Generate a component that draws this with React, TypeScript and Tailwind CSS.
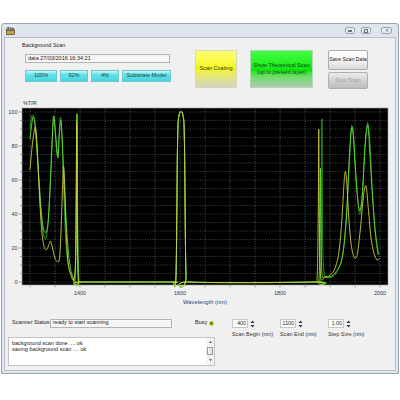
import React from 'react';

type Pt = [number, number];

// nm / %T -> pixel position in the chart svg (same coordinates as the page)
const px = (nm: number) => 30 + (nm - 1300) * 0.5;
const py = (v: number) => 282 - v * 1.7;

const toPath = (pts: Pt[]) => {
  const p = pts.map(([nm, v]) => [px(nm), py(v)]);
  let d = `M${p[0][0]},${p[0][1]}`;
  for (let i = 0; i < p.length - 1; i++) {
    const p0 = p[i - 1] || p[i];
    const p1 = p[i];
    const p2 = p[i + 1];
    const p3 = p[i + 2] || p2;
    const c1x = p1[0] + (p2[0] - p0[0]) / 6;
    const c1y = p1[1] + (p2[1] - p0[1]) / 6;
    const c2x = p2[0] - (p3[0] - p1[0]) / 6;
    const c2y = p2[1] - (p3[1] - p1[1]) / 6;
    d += ` C${c1x.toFixed(2)},${c1y.toFixed(2)} ${c2x.toFixed(2)},${c2y.toFixed(2)} ${p2[0].toFixed(2)},${p2[1].toFixed(2)}`;
  }
  return d;
};

const peak1600: Pt[] = [
  [1586, 0], [1592, 4], [1595, 80], [1598, 98], [1606, 98], [1609, 80], [1612, 4], [1618, 0],
];

const greenPts: Pt[] = [
  [1300, 90], [1303, 97], [1306, 98], [1310, 93], [1316, 68], [1322, 40], [1328, 27], [1333, 27],
  [1338, 42], [1343, 76], [1347, 97], [1350, 92], [1353, 78], [1355, 75], [1358, 86], [1361, 97],
  [1364, 84], [1368, 50], [1372, 22], [1378, 8], [1385, 3], [1390, 2], [1392, 30], [1393.5, 98],
  [1395, 30], [1397, 1], [1402, 0], [1580, 0], ...peak1600, [1870, 0], [1880, 1], [1883, 30],
  [1884, 96], [1885, 30], [1888, 6], [1894, 3], [1904, 3], [1914, 6], [1924, 14], [1932, 34],
  [1938, 66], [1942, 88], [1944, 92], [1947, 86], [1952, 62], [1957, 44], [1960, 40], [1964, 48],
  [1969, 74], [1974, 92], [1976, 93], [1979, 86], [1984, 58], [1989, 34], [1993, 22], [1996, 16],
];

const limePts: Pt[] = [
  [1300, 84], [1305, 96], [1308, 96], [1312, 87], [1318, 60], [1324, 37], [1330, 29], [1336, 35],
  [1342, 66], [1346, 94], [1348, 96], [1352, 84], [1356, 73], [1359, 88], [1362, 95], [1365, 80],
  [1368, 60], [1372, 38], [1376, 20], [1381, 8], [1386, 3], [1390, 2], [1392, 40], [1394, 99],
  [1395.5, 30], [1398, 0], [1404, 0], [1580, 0], ...peak1600, [1872, 0], [1878, 2], [1880, 30],
  [1881, 67], [1882, 30], [1884, 5], [1890, 3], [1900, 3], [1912, 6], [1925, 15], [1933, 40],
  [1939, 76], [1943, 90], [1946, 88], [1950, 70], [1955, 50], [1960, 42], [1965, 53], [1970, 80],
  [1974, 91], [1977, 89], [1982, 64], [1988, 38], [1994, 22], [1998, 16],
];

const yellowPts: Pt[] = [
  [1300, 66], [1304, 79], [1308, 88], [1311, 91], [1314, 81], [1318, 56], [1323, 32], [1328, 21],
  [1333, 19], [1338, 22], [1341, 24], [1345, 20], [1350, 14], [1355, 12], [1359, 14], [1362, 30],
  [1365, 55], [1367, 68], [1369, 60], [1372, 32], [1376, 12], [1382, 4], [1388, 2], [1392, 20],
  [1393.5, 94], [1395, 20], [1397, 0], [1402, 0], [1580, 0], ...peak1600, [1868, 0], [1874, 2],
  [1876.5, 40], [1877.5, 90], [1878.5, 40], [1881, 4], [1890, 3], [1900, 4], [1910, 8], [1918, 18],
  [1924, 38], [1928, 58], [1931, 65], [1934, 56], [1939, 32], [1944, 19], [1950, 14], [1955, 17],
  [1961, 32], [1966, 48], [1970, 56], [1973, 55], [1977, 42], [1982, 26], [1988, 17], [1994, 13],
  [2000, 14],
];

const SpectrumChart: React.FC = () => {
  const vLines = Array.from({ length: 15 }, (_, i) => 30 + i * 25);
  const hLines = Array.from({ length: 21 }, (_, i) => 282 - i * 8.5);
  const yLabels = [100, 80, 60, 40, 20, 0];
  return (
    <svg width="390" height="220" viewBox="5 91 390 220" className="block">
      <text x="23" y="104.5" fontSize="5.5" fill="#2b2f3a">%T/R</text>
      <rect x="22" y="108" width="366" height="177" fill="#000" stroke="#9aa3ad" strokeWidth="0.6" />
      {vLines.map((x) => (
        <line key={`v${x}`} x1={x} y1="108.5" x2={x} y2="284.5" stroke="#8a8a8a" strokeWidth="0.6" strokeDasharray="1 1.5" />
      ))}
      {hLines.map((y) => (
        <line key={`h${y}`} x1="22.5" y1={y} x2="387.5" y2={y} stroke="#6e6e6e" strokeWidth="0.6" strokeDasharray="1 1.5" />
      ))}
      {hLines.map((y, i) => (
        <line key={`t${y}`} x1={i % 4 === 0 ? 18.5 : 20} y1={y} x2="22" y2={y} stroke="#5d6674" strokeWidth="0.5" />
      ))}
      {vLines.map((x) => (
        <line key={`xt${x}`} x1={x} y1="285" x2={x} y2="287.5" stroke="#5d6674" strokeWidth="0.5" />
      ))}
      {yLabels.map((v) => (
        <text key={v} x="17.5" y={py(v) + 2} fontSize="5.5" textAnchor="end" fill="#2f3b55">{v}</text>
      ))}
      {[1400, 1600, 1800, 2000].map((nm) => (
        <text key={nm} x={px(nm)} y="294.5" fontSize="5.5" textAnchor="middle" fill="#2f3b55">{nm}</text>
      ))}
      <text x="205" y="304" fontSize="5.8" textAnchor="middle" fill="#27467a">Wavelength (nm)</text>
      <g fill="none" strokeWidth="0.9" strokeLinejoin="round">
        <path d={toPath(greenPts)} stroke="#1faa24" />
        <path d={toPath(limePts)} stroke="#6bdc2c" />
        <path d={toPath(yellowPts)} stroke="#cdcd3c" />
      </g>
    </svg>
  );
};

const Spinner: React.FC<{ value: string; label: string }> = ({ value, label }) => (
  <div className="w-[48px] flex flex-col">
    <div className="mt-[8px] flex items-center">
      <div className="w-[16px] h-[9px] bg-white border border-[#c6c6c6] flex items-center justify-end pr-[1px] text-[5.3px] leading-none text-[#222]">
        {value}
      </div>
      <svg width="5" height="8" viewBox="0 0 5 8" className="ml-[2px]">
        <path d="M2.5 0.5 L4.5 3 L0.5 3 Z" fill="#333" />
        <path d="M0.5 5 L4.5 5 L2.5 7.5 Z" fill="#333" />
      </svg>
    </div>
    <div className="mt-[3px] text-[5.5px] leading-[7px] text-[#333] whitespace-nowrap">{label}</div>
  </div>
);

const App: React.FC = () => {
  return (
    <div className="w-[400px] h-[400px] bg-white pt-[23px] pl-[1px] font-['Liberation_Sans',Arial,sans-serif]">
      <div className="w-[398px] h-[351px] border border-[#9aa4b0] rounded-t-[3px] bg-[#dfe5ec] flex flex-col">
        {/* title bar */}
        <div className="h-[13px] flex items-center">
          <svg width="9" height="8" viewBox="0 0 9 8" className="ml-[4px]">
            <rect x="0.5" y="3" width="8" height="4.5" fill="#c9a040" stroke="#3a2a10" strokeWidth="0.6" />
            <path d="M0.5 3 L1.5 0.5 L8 1.5 L7.5 3 Z" fill="#f2f2f2" stroke="#222" strokeWidth="0.6" />
            <path d="M2.5 0.8 L2 2.8 M4.5 1.1 L4 3 M6.5 1.4 L6 3" stroke="#222" strokeWidth="0.8" />
          </svg>
          <div className="ml-auto mr-[6px] flex gap-[6px]">
            <div className="w-[10px] h-[7px] rounded-[2px] border border-[#9aa2ac] bg-[#e7ebf0] flex items-center justify-center">
              <div className="w-[4px] h-[2px] border border-[#6b7480]" />
            </div>
            <div className="w-[10px] h-[7px] rounded-[2px] border border-[#9aa2ac] bg-[#e7ebf0] flex items-center justify-center">
              <div className="w-[4px] h-[4px] border border-[#6b7480]" />
            </div>
            <div className="ml-[4px] w-[11px] h-[7px] rounded-[2px] border border-[#9aa2ac] bg-[#e7ebf0] flex items-center justify-center text-[5px] leading-none text-[#6b7480]">
              ✕
            </div>
          </div>
        </div>

        {/* client area */}
        <div className="mx-[2px] mb-[2px] flex-1 bg-[#f0f0f0] border border-[#b7c0ca] flex flex-col text-[#222]">
          {/* top controls */}
          <div className="h-[53px] flex">
            <div className="ml-[17px] w-[150px] pt-[3px]">
              <div className="h-[8px] text-[5.5px] leading-[8px]">Background Scan</div>
              <div className="mt-[5px] ml-[3px] w-[145px] h-[9px] bg-[#f6f6f6] border border-[#b4b4b4] flex items-center pl-[2px] text-[5.5px] leading-none">
                data 27/03/2016 16:34:21
              </div>
              <div className="mt-[7px] ml-[3px] flex gap-[3px]">
                {[
                  ['100%', 'w-[32px]'],
                  ['92%', 'w-[28px]'],
                  ['4%', 'w-[28px]'],
                  ['Substrate Model', 'w-[49px]'],
                ].map(([t, w]) => (
                  <div
                    key={t}
                    className={`${w} h-[12px] border border-[#74c4cc] bg-linear-to-b from-[#c8f8fa] via-[#62e2e8] via-35% to-[#48d6de] flex items-center justify-center text-[5.5px] leading-none text-[#1d3c44] whitespace-nowrap`}
                  >
                    {t}
                  </div>
                ))}
              </div>
            </div>
            <div className="ml-[23px] mt-[12px] w-[42px] h-[38px] border border-[#d6d6b8] bg-linear-to-b from-[#ffff70] via-[#f4f400] via-50% to-[#d2d2bb] flex items-center justify-center text-[5.5px] leading-none text-[#333]">
              Scan Coating
            </div>
            <div className="ml-[13px] mt-[12px] w-[63px] h-[38px] border border-[#b8d4b8] bg-linear-to-b from-[#40ff40] via-[#06e606] via-55% to-[#aecaae] flex flex-col items-center justify-center text-[5.5px] leading-[7px] text-[#1e3a1e]">
              <span>Show Theoretical Scan</span>
              <span>(up to present layer)</span>
            </div>
            <div className="ml-[15px] mt-[12px] w-[40px] flex flex-col gap-[2px]">
              <div className="h-[20px] rounded-[2px] border border-[#acacac] bg-linear-to-b from-white via-[#f5f5f5] via-50% to-[#dadada] flex items-center justify-center text-[5.2px] leading-none text-[#222] whitespace-nowrap">
                Save Scan Data
              </div>
              <div className="h-[17px] rounded-[2px] border border-[#b0b0b0] bg-linear-to-b from-[#ececec] via-[#d2d2d2] via-50% to-[#bcbcbc] flex items-center justify-center text-[5.5px] leading-none text-[#a2a2a2]">
                Stop Scan
              </div>
            </div>
          </div>

          {/* chart */}
          <SpectrumChart />

          {/* status and scan range */}
          <div className="flex">
            <div className="ml-[3px] w-[207px] flex flex-col">
              <div className="mt-[7px] h-[10px] flex items-center text-[5.5px] leading-none">
                <span className="ml-[4px] w-[38px] whitespace-nowrap">Scanner Status</span>
                <div className="w-[122px] h-[9px] bg-[#f6f6f6] border border-[#b4b4b4] flex items-center pl-[2px]">
                  ready to start scanning
                </div>
                <span className="ml-[23px]">Busy</span>
                <div className="ml-[2px] w-[5px] h-[5px] rounded-full bg-[#8e9a18] border border-[#c8cc40] flex items-center justify-center">
                  <div className="w-[1.5px] h-[1.5px] rounded-full bg-[#3a4008]" />
                </div>
              </div>
              <div className="mt-[9px] h-[29px] bg-white border border-[#c3c3c3] flex">
                <div className="flex-1 pl-[3px] pt-[2px] text-[5.5px] leading-[6px] text-[#222]">
                  <div>background scan done .... ok</div>
                  <div>saving background scan .... ok</div>
                </div>
                <div className="w-[8px] bg-[#f3f3f3] flex flex-col items-center">
                  <svg width="5" height="4" viewBox="0 0 5 4" className="mt-[2px]">
                    <path d="M2.5 0.8 L4 3 L1 3 Z" fill="#666" />
                  </svg>
                  <div className="mt-[3px] w-[6px] h-[8px] border border-[#9c9c9c] bg-linear-to-r from-[#f4f4f4] to-[#dcdcdc]" />
                  <svg width="5" height="4" viewBox="0 0 5 4" className="mt-[3px]">
                    <path d="M1 1 L4 1 L2.5 3.2 Z" fill="#666" />
                  </svg>
                </div>
              </div>
            </div>
            <div className="ml-[17px] flex">
              <Spinner value="400" label="Scan Begin (nm)" />
              <Spinner value="1100" label="Scan End (nm)" />
              <Spinner value="1.00" label="Step Size (nm)" />
            </div>
          </div>
        </div>
      </div>
    </div>
  );
};

export default App;
